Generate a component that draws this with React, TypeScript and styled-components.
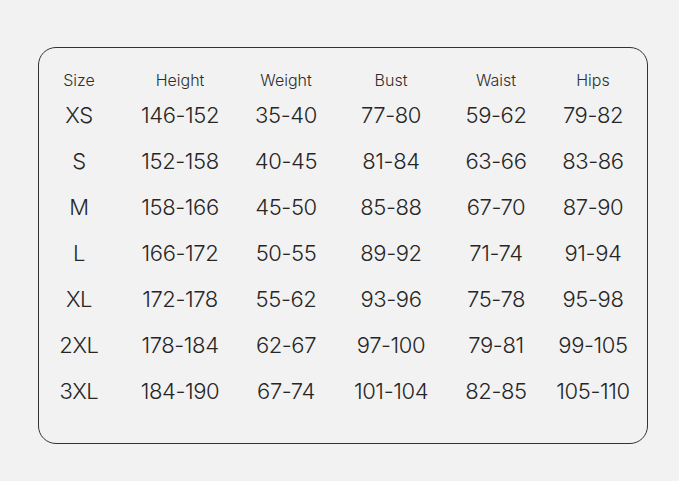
import React from "react";
import styled, { createGlobalStyle } from "styled-components";

const GlobalStyle = createGlobalStyle`
  html, body {
    margin: 0;
    padding: 0;
    background: #f2f2f2;
  }
  body {
    font-family: "Inter", "Noto Sans", "Liberation Sans", sans-serif;
    color: #333;
  }
`;

const Page = styled.main`
  width: 679px;
  height: 481px;
  padding: 47px 0 0 38px;
  box-sizing: border-box;
`;

const Chart = styled.section`
  width: 610px;
  height: 397px;
  box-sizing: border-box;
  border: 1.5px solid #333;
  border-radius: 18px;
  padding-top: 20px;
`;

const Grid = styled.div`
  display: grid;
  grid-template-columns: 80px 122px 90px 120px 90px 104px;
  grid-template-rows: 24px;
  grid-auto-rows: 46px;
  align-items: center;
  justify-items: center;
`;

const Head = styled.div`
  font-size: 16px;
  font-weight: 350;
  line-height: 24px;
  color: #2e2e2e;
`;

const Cell = styled.div`
  font-size: 22px;
  font-weight: 320;
  line-height: 46px;
  color: #262626;
  letter-spacing: -0.4px;
`;

const headers = ["Size", "Height", "Weight", "Bust", "Waist", "Hips"];

const rows = [
  ["XS", "146-152", "35-40", "77-80", "59-62", "79-82"],
  ["S", "152-158", "40-45", "81-84", "63-66", "83-86"],
  ["M", "158-166", "45-50", "85-88", "67-70", "87-90"],
  ["L", "166-172", "50-55", "89-92", "71-74", "91-94"],
  ["XL", "172-178", "55-62", "93-96", "75-78", "95-98"],
  ["2XL", "178-184", "62-67", "97-100", "79-81", "99-105"],
  ["3XL", "184-190", "67-74", "101-104", "82-85", "105-110"],
];

const App: React.FC = () => {
  return (
    <>
      <GlobalStyle />
      <Page>
        <Chart>
          <Grid>
            {headers.map((h) => (
              <Head key={h}>{h}</Head>
            ))}
            {rows.map((row) =>
              row.map((value, i) => <Cell key={row[0] + i}>{value}</Cell>)
            )}
          </Grid>
        </Chart>
      </Page>
    </>
  );
};

export default App;
